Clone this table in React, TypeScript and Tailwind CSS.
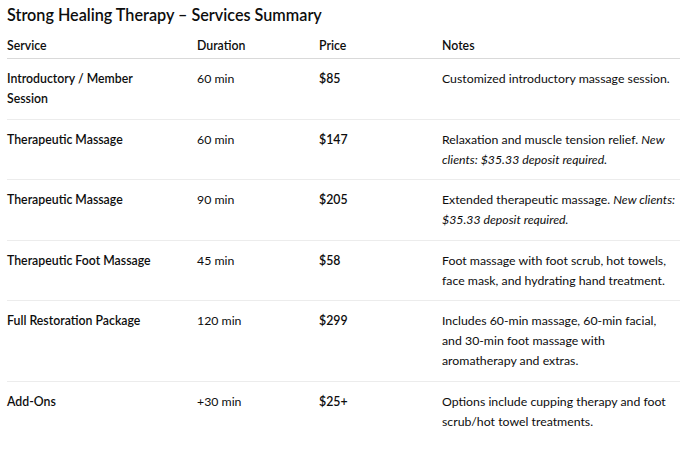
import React from 'react';

type Row = {
    service: string;
    duration: string;
    price: string;
    note: React.ReactNode;
};

const rows: Row[] = [
    {
        service: 'Introductory / Member Session',
        duration: '60 min',
        price: '$85',
        note: 'Customized introductory massage session.',
    },
    {
        service: 'Therapeutic Massage',
        duration: '60 min',
        price: '$147',
        note: (
            <>
                Relaxation and muscle tension relief. <em>New clients: $35.33 deposit required.</em>
            </>
        ),
    },
    {
        service: 'Therapeutic Massage',
        duration: '90 min',
        price: '$205',
        note: (
            <>
                Extended therapeutic massage. <em>New clients: $35.33 deposit required.</em>
            </>
        ),
    },
    {
        service: 'Therapeutic Foot Massage',
        duration: '45 min',
        price: '$58',
        note: 'Foot massage with foot scrub, hot towels, face mask, and hydrating hand treatment.',
    },
    {
        service: 'Full Restoration Package',
        duration: '120 min',
        price: '$299',
        note: 'Includes 60-min massage, 60-min facial, and 30-min foot massage with aromatherapy and extras.',
    },
    {
        service: 'Add-Ons',
        duration: '+30 min',
        price: '$25+',
        note: 'Options include cupping therapy and foot scrub/hot towel treatments.',
    },
];

const cols = 'grid grid-cols-[190px_122px_123px_238px]';

const App = () => {
    return (
        <div className="min-h-screen bg-white px-[7px] pt-[4px] text-[#0d0d0d] font-['Lato','Noto_Sans',sans-serif]">
            <h2 className="text-[16.2px] leading-[22px] font-semibold">Strong Healing Therapy – Services Summary</h2>

            <div className="mt-[10px] w-[673px] text-[12.3px] leading-[20px]">
                {/* ヘッダー */}
                <div className={`${cols} border-b border-[#d9d9d9] pb-[2px] font-semibold`}>
                    <div>Service</div>
                    <div>Duration</div>
                    <div>Price</div>
                    <div>Notes</div>
                </div>

                {rows.map((r, i) => (
                    <div
                        key={i}
                        className={`${cols} pt-[10px] pb-[9.5px] ${i < rows.length - 1 ? 'border-b border-[#ececec]' : ''}`}
                    >
                        <div className="pr-6 font-semibold">{r.service}</div>
                        <div>{r.duration}</div>
                        <div className="font-semibold">{r.price}</div>
                        <div className="pr-[2px]">{r.note}</div>
                    </div>
                ))}
            </div>
        </div>
    );
};

export default App;
